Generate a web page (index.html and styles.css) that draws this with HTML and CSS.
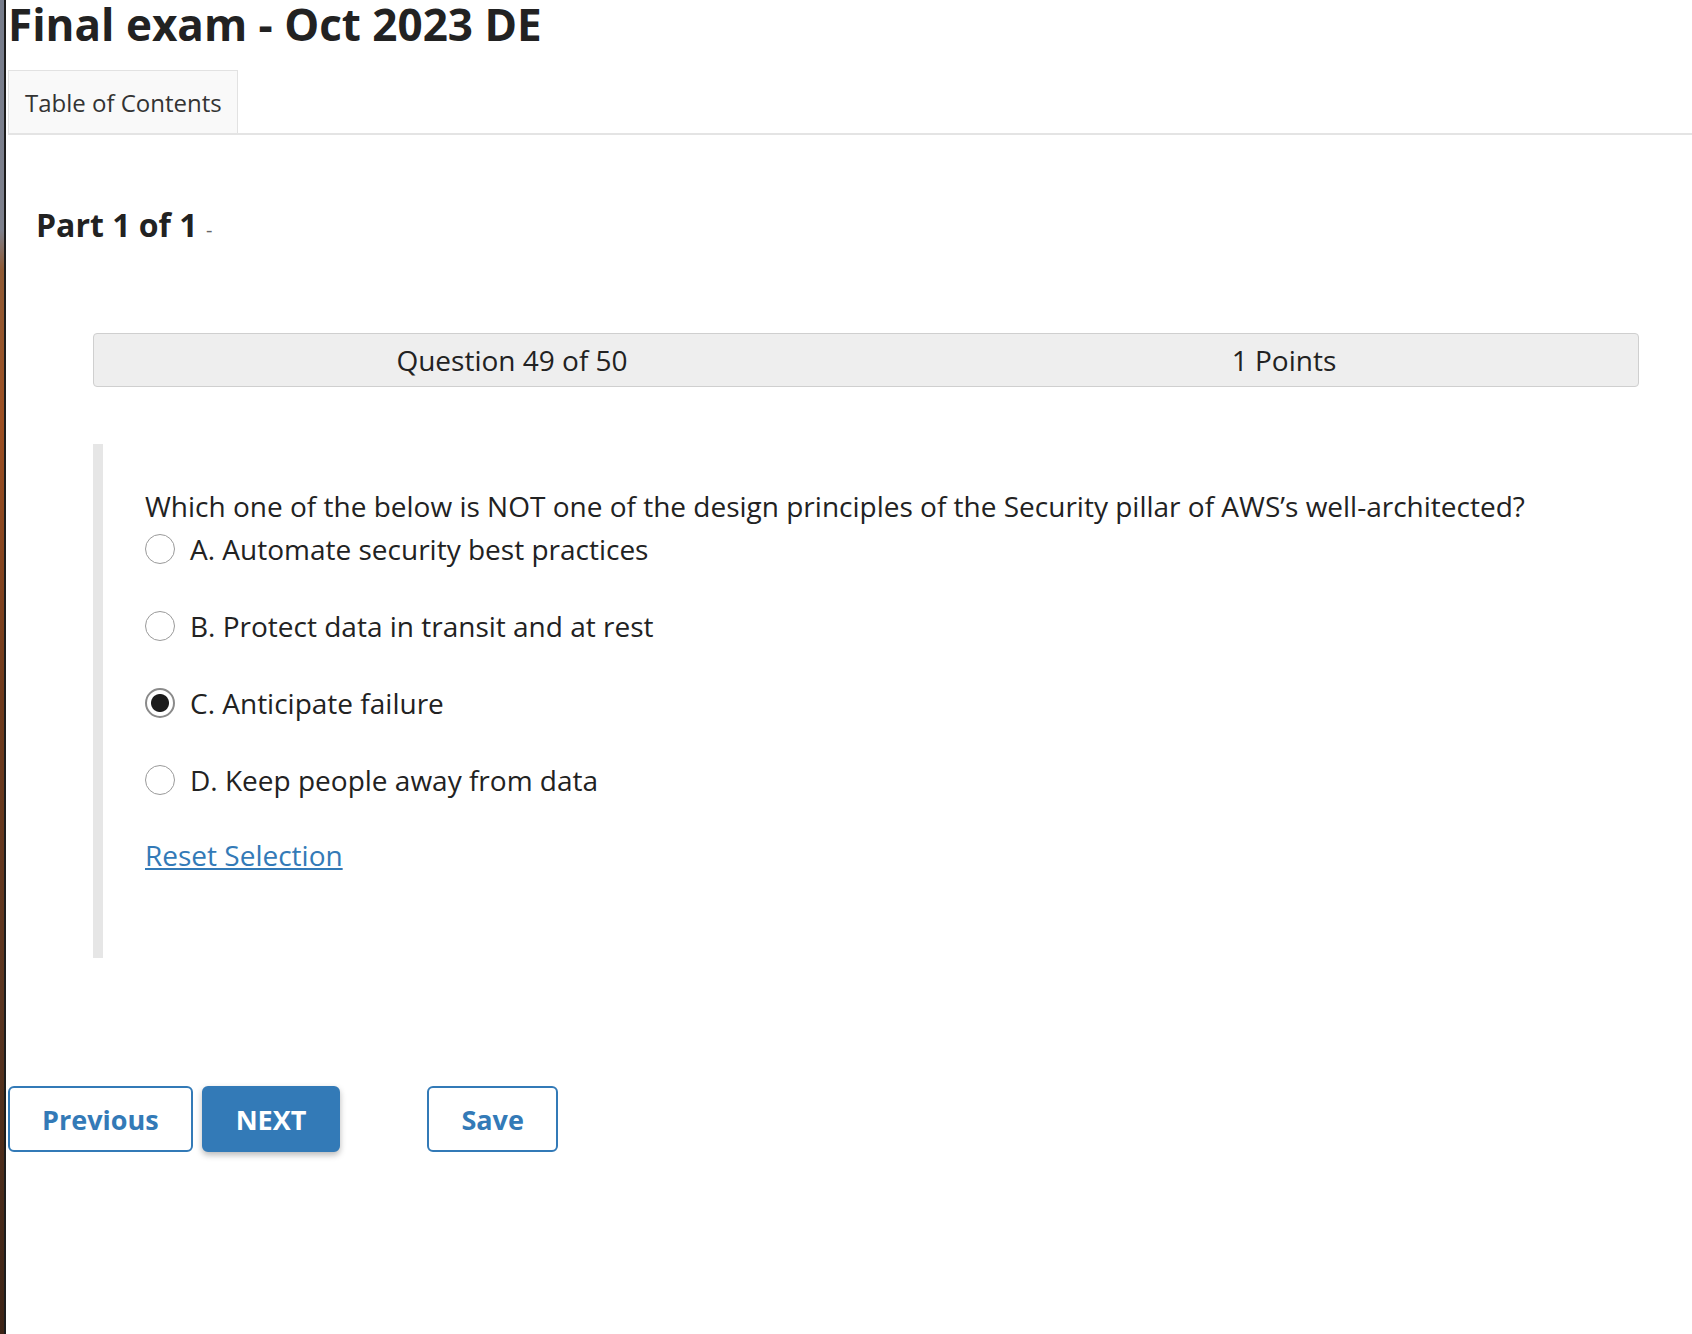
FILE: index.html
```html
<!DOCTYPE html>
<html lang="en">
<head>
<meta charset="utf-8">
<title>Final exam - Oct 2023 DE</title>
<link rel="stylesheet" href="styles.css">
</head>
<body>
<div class="screen">
  <div class="wallpaper"></div>
  <main class="page">
    <h1 class="title">Final exam - Oct 2023 DE</h1>
    <div class="tabs">
      <div class="tab">Table of Contents</div>
    </div>
    <h2 class="part">Part 1 of 1 <span class="dash">-</span></h2>
    <div class="qbar">
      <div class="qrow">
        <div class="qcol">Question 49 of 50</div>
        <div class="qcol">1 Points</div>
      </div>
    </div>
    <section class="question">
      <p class="qtext">Which one of the below is NOT one of the design principles of the Security pillar of AWS’s well-architected?</p>
      <ul class="options">
        <li class="option"><span class="radio"></span><span class="label">A. Automate security best practices</span></li>
        <li class="option"><span class="radio"></span><span class="label">B. Protect data in transit and at rest</span></li>
        <li class="option"><span class="radio checked"></span><span class="label">C. Anticipate failure</span></li>
        <li class="option"><span class="radio"></span><span class="label">D. Keep people away from data</span></li>
      </ul>
      <a class="reset" href="#">Reset Selection</a>
    </section>
    <div class="actions">
      <button class="btn">Previous</button>
      <button class="btn primary">NEXT</button>
      <button class="btn save">Save</button>
    </div>
  </main>
</div>
</body>
</html>
```
FILE: styles.css
```css
html, body {
  margin: 0;
  padding: 0;
  background: #fff;
}
body {
  font-family: "Open Sans", "Noto Sans", "Liberation Sans", sans-serif;
  color: #222;
}
.screen {
  display: flex;
  min-height: 1334px;
}
.wallpaper {
  flex: 0 0 4px;
  border-right: 2px solid #1c1c1c;
  background: linear-gradient(to bottom, #767c8b 0, #7d808c 230px, #8f5a34 270px, #9c4f22 420px, #6e3a1c 700px, #5a3520 1000px, #3d2416 1334px);
}
.page {
  flex: 1;
  padding-left: 2px;
  min-width: 0;
}
.title {
  margin: 0;
  font-size: 44px;
  line-height: 48px;
  font-weight: 700;
  color: #222;
}
.tabs {
  margin-top: 22px;
  border-bottom: 2px solid #e4e4e4;
  display: flex;
}
.tab {
  height: 62px;
  display: flex;
  align-items: center;
  padding: 0 15px 0 16px;
  background: #f9f9f9;
  border: 1px solid #e2e2e2;
  border-bottom: none;
  font-size: 24px;
  color: #333;
}
.part {
  margin: 68px 0 0 28px;
  font-size: 32px;
  font-weight: 700;
  line-height: normal;
  color: #222;
}
.dash {
  font-size: 20px;
  font-weight: 400;
  color: #666;
}
.qbar {
  margin: 87px 53px 0 85px;
  height: 52px;
  border: 1px solid #cfcfcf;
  border-radius: 4px;
  background: #eeeeee;
  display: flex;
  align-items: center;
}
.qrow {
  flex: 1;
  display: flex;
  margin-left: 32px;
  margin-right: -32px;
}
.qcol {
  flex: 1;
  text-align: center;
  font-size: 28px;
  line-height: 38px;
  color: #222;
}
.question {
  margin: 57px 0 0 85px;
  border-left: 10px solid #e6e6e6;
  padding: 44px 0 85px 42px;
}
.qtext {
  margin: 0;
  font-size: 28px;
  line-height: 36px;
}
.options {
  list-style: none;
  margin: 7px 0 0;
  padding: 0;
  display: flex;
  flex-direction: column;
  gap: 41px;
}
.option {
  display: flex;
  align-items: center;
  height: 36px;
  font-size: 28px;
}
.radio {
  flex: 0 0 auto;
  width: 30px;
  height: 30px;
  box-sizing: border-box;
  border: 1.5px solid #9a9a9a;
  border-radius: 50%;
  background: #fff;
  margin-right: 15px;
}
.radio.checked {
  border: 2px solid #8a8a8a;
  background: radial-gradient(circle, #1b1b1b 0, #1b1b1b 8.5px, #fff 9.5px);
}
.reset {
  display: inline-block;
  margin-top: 39px;
  font-size: 28px;
  line-height: 36px;
  color: #337ab7;
  text-decoration: underline;
}
.actions {
  margin-top: 128px;
  display: flex;
  align-items: center;
}
.btn {
  font-family: inherit;
  font-size: 27px;
  font-weight: 700;
  height: 66px;
  padding: 0 32px;
  border: 2px solid #337ab7;
  border-radius: 6px;
  background: #fff;
  color: #337ab7;
  cursor: pointer;
}
.btn.primary {
  margin-left: 9px;
  background: #337ab7;
  color: #fff;
  box-shadow: 0 3px 6px rgba(0, 0, 0, 0.28);
}
.btn.save {
  margin-left: 87px;
}
```
